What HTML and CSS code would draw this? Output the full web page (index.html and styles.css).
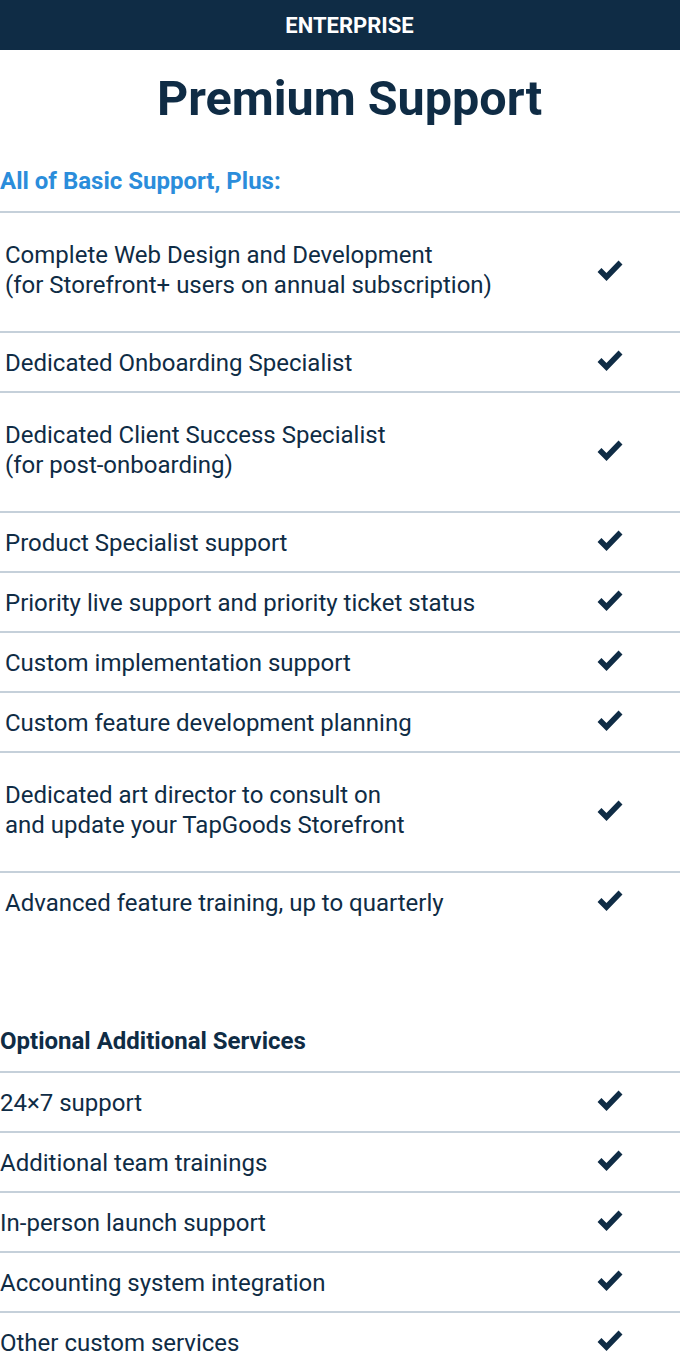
FILE: index.html
```html
<!DOCTYPE html>
<html lang="en">
<head>
<meta charset="utf-8">
<title>Premium Support</title>
<link rel="stylesheet" href="styles.css">
</head>
<body>
<div class="tier-bar">ENTERPRISE</div>
<h1 class="plan-title">Premium Support</h1>

<section class="feature-group indented">
  <h2 class="group-title accent">All of Basic Support, Plus:</h2>
  <div class="feature-row tall">
    <div class="feature-text">Complete Web Design and Development<br>(for Storefront+ users on annual subscription)</div>
    <div class="feature-check"><svg class="check" viewBox="0 0 28 26"><polyline points="3.5,13 10.5,20 24.5,5.5"/></svg></div>
  </div>
  <div class="feature-row">
    <div class="feature-text">Dedicated Onboarding Specialist</div>
    <div class="feature-check"><svg class="check" viewBox="0 0 28 26"><polyline points="3.5,13 10.5,20 24.5,5.5"/></svg></div>
  </div>
  <div class="feature-row tall">
    <div class="feature-text">Dedicated Client Success Specialist<br>(for post-onboarding)</div>
    <div class="feature-check"><svg class="check" viewBox="0 0 28 26"><polyline points="3.5,13 10.5,20 24.5,5.5"/></svg></div>
  </div>
  <div class="feature-row">
    <div class="feature-text">Product Specialist support</div>
    <div class="feature-check"><svg class="check" viewBox="0 0 28 26"><polyline points="3.5,13 10.5,20 24.5,5.5"/></svg></div>
  </div>
  <div class="feature-row">
    <div class="feature-text">Priority live support and priority ticket status</div>
    <div class="feature-check"><svg class="check" viewBox="0 0 28 26"><polyline points="3.5,13 10.5,20 24.5,5.5"/></svg></div>
  </div>
  <div class="feature-row">
    <div class="feature-text">Custom implementation support</div>
    <div class="feature-check"><svg class="check" viewBox="0 0 28 26"><polyline points="3.5,13 10.5,20 24.5,5.5"/></svg></div>
  </div>
  <div class="feature-row">
    <div class="feature-text">Custom feature development planning</div>
    <div class="feature-check"><svg class="check" viewBox="0 0 28 26"><polyline points="3.5,13 10.5,20 24.5,5.5"/></svg></div>
  </div>
  <div class="feature-row tall">
    <div class="feature-text">Dedicated art director to consult on<br>and update your TapGoods Storefront</div>
    <div class="feature-check"><svg class="check" viewBox="0 0 28 26"><polyline points="3.5,13 10.5,20 24.5,5.5"/></svg></div>
  </div>
  <div class="feature-row">
    <div class="feature-text">Advanced feature training, up to quarterly</div>
    <div class="feature-check"><svg class="check" viewBox="0 0 28 26"><polyline points="3.5,13 10.5,20 24.5,5.5"/></svg></div>
  </div>
</section>

<section class="feature-group optional">
  <h2 class="group-title">Optional Additional Services</h2>
  <div class="feature-row">
    <div class="feature-text">24×7 support</div>
    <div class="feature-check"><svg class="check" viewBox="0 0 28 26"><polyline points="3.5,13 10.5,20 24.5,5.5"/></svg></div>
  </div>
  <div class="feature-row">
    <div class="feature-text">Additional team trainings</div>
    <div class="feature-check"><svg class="check" viewBox="0 0 28 26"><polyline points="3.5,13 10.5,20 24.5,5.5"/></svg></div>
  </div>
  <div class="feature-row">
    <div class="feature-text">In-person launch support</div>
    <div class="feature-check"><svg class="check" viewBox="0 0 28 26"><polyline points="3.5,13 10.5,20 24.5,5.5"/></svg></div>
  </div>
  <div class="feature-row">
    <div class="feature-text">Accounting system integration</div>
    <div class="feature-check"><svg class="check" viewBox="0 0 28 26"><polyline points="3.5,13 10.5,20 24.5,5.5"/></svg></div>
  </div>
  <div class="feature-row">
    <div class="feature-text">Other custom services</div>
    <div class="feature-check"><svg class="check" viewBox="0 0 28 26"><polyline points="3.5,13 10.5,20 24.5,5.5"/></svg></div>
  </div>
</section>
</body>
</html>
```

FILE: styles.css
```css
html, body {
  margin: 0;
  padding: 0;
  background: #ffffff;
}

body {
  font-family: Roboto, "Liberation Sans", Arial, sans-serif;
  color: #0f2c45;
  width: 680px;
  overflow: hidden;
}

.tier-bar {
  height: 50px;
  padding-left: 19px;
  background: #0f2c45;
  color: #ffffff;
  font-weight: 700;
  font-size: 22px;
  display: flex;
  align-items: center;
  justify-content: center;
}

.plan-title {
  margin: 0;
  height: 101px;
  box-sizing: border-box;
  padding-top: 21px;
  padding-left: 19px;
  font-size: 48.5px;
  line-height: 56px;
  font-weight: 700;
  text-align: center;
  color: #0f2c45;
}

.feature-group {
  display: flex;
  flex-direction: column;
}

.group-title {
  margin: 0;
  height: 60px;
  display: flex;
  align-items: center;
  font-size: 24px;
  font-weight: 700;
  color: #0f2c45;
}

.group-title.accent {
  color: #2b8ddb;
}

.optional {
  margin-top: 80px;
}

.feature-row {
  display: flex;
  align-items: center;
  height: 58px;
  border-top: 2px solid #c5d0da;
}

.feature-row.tall {
  height: 118px;
}

.feature-text {
  flex: 1;
  font-size: 24px;
  line-height: 30px;
  padding-top: 2px;
}

.tall .feature-text {
  padding-top: 0;
  padding-bottom: 4px;
}

.indented .feature-text {
  padding-left: 5px;
}

.feature-check {
  width: 140px;
  display: flex;
  justify-content: center;
  padding-bottom: 4px;
}

.check {
  width: 28px;
  height: 26px;
  fill: none;
  stroke: #0f2c45;
  stroke-width: 5.5;
  stroke-linejoin: miter;
  stroke-linecap: butt;
}
```
